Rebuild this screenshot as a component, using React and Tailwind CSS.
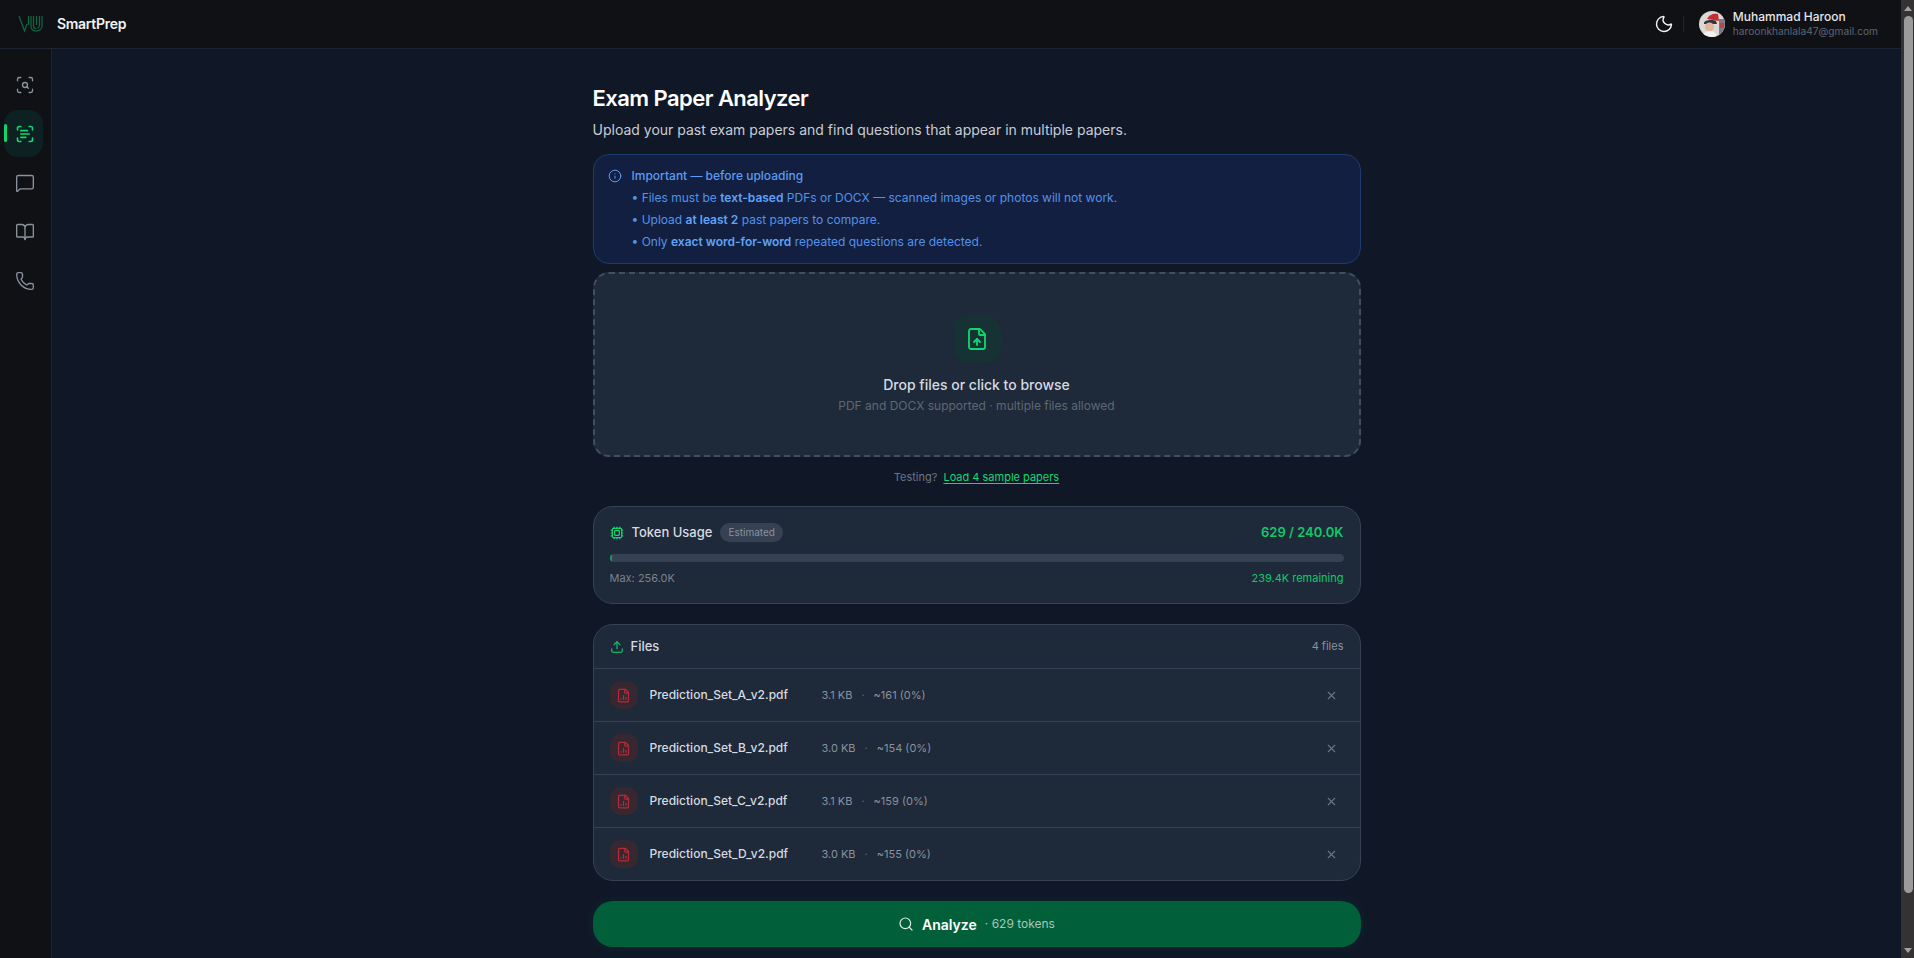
import React from "react";
import {
  ScanSearch,
  ScanText,
  MessageSquare,
  BookOpen,
  Phone,
  Moon,
  Info,
  FileUp,
  Cpu,
  Upload,
  FileChartColumn,
  X,
  Search,
} from "lucide-react";

const files = [
  { name: "Prediction_Set_A_v2.pdf", size: "3.1 KB", tokens: "~161 (0%)" },
  { name: "Prediction_Set_B_v2.pdf", size: "3.0 KB", tokens: "~154 (0%)" },
  { name: "Prediction_Set_C_v2.pdf", size: "3.1 KB", tokens: "~159 (0%)" },
  { name: "Prediction_Set_D_v2.pdf", size: "3.0 KB", tokens: "~155 (0%)" },
];

const Logo = () => (
  <svg width="26" height="18" viewBox="0 0 26 18" fill="none" stroke="#0b6b45" strokeWidth="1.2">
    <path d="M1 1l5.5 15L9 9" />
    <path d="M10.5 1v9" />
    <path d="M13 1v10c0 3 1.5 5 5 5s6-2 6-5V1" />
    <path d="M15.5 1v10c0 1.5 1 2.5 2.5 2.5" />
    <path d="M18.5 1v9" />
    <path d="M21.5 1v9c0 2-1 3-2 3.5" />
  </svg>
);

const Avatar = () => (
  <svg width="26" height="26" viewBox="0 0 26 26" className="rounded-full">
    <rect width="26" height="26" fill="#dcd8d6" />
    <path d="M8 8c2-4 6-6 11-5l1 7z" fill="#c42f35" />
    <path d="M5 12c0-3 8-4 12-2l1 3H5z" fill="#35343a" />
    <circle cx="10.5" cy="16" r="4.5" fill="#e3b49c" />
    <path d="M3 26c1-4 4-6 8-6s6 2 7 6z" fill="#f4f1f0" />
    <path d="M20 8h6v18h-6z" fill="#7e7a82" />
    <path d="M21 12h4v5h-4z" fill="#b8474b" />
  </svg>
);

// the page scrolls in the reference, this is just its scrollbar
const ScrollBar = () => (
  <div className="w-[13px] h-full shrink-0 bg-[#353234] flex flex-col items-center">
    <div className="h-[16px] flex items-center justify-center">
      <div className="w-0 h-0 border-x-[4px] border-x-transparent border-b-[5px] border-b-[#a3a3a3]" />
    </div>
    <div className="w-[9px] ml-[1px] h-[877px] rounded-full bg-[#9b9b9b]" />
    <div className="mt-auto h-[16px] flex items-center justify-center">
      <div className="w-0 h-0 border-x-[4px] border-x-transparent border-t-[5px] border-t-[#a3a3a3]" />
    </div>
  </div>
);

const SideItem = ({ icon: Icon, active }) => (
  <div className="relative w-full h-[49px] flex items-center">
    {active && <div className="absolute left-[4px] top-[15px] w-[3px] h-[18px] rounded-full bg-[#0fd56f]" />}
    <div
      className={`ml-[4px] w-[39px] h-[47px] pl-[3px] rounded-[14px] flex items-center justify-center ${
        active ? "bg-[#0d2123] text-[#10d870]" : "text-[#8a929e]"
      }`}
    >
      <Icon size={20} strokeWidth={active ? 2 : 1.6} />
    </div>
  </div>
);

const FileRow = ({ file }) => (
  <div className="h-[53px] flex items-center px-4 border-t border-[#364153]">
    <div className="w-7 h-7 rounded-[10px] bg-[#372730] flex items-center justify-center text-[#b32c37] shrink-0">
      <FileChartColumn size={15} strokeWidth={2} />
    </div>
    <span className="ml-3 w-[172px] text-[12px] font-medium text-[#d6dae0]">{file.name}</span>
    <span className="text-[11px] text-[#8a929e]">{file.size}</span>
    <span className="mx-[9px] text-[11px] text-[#5f6875]">·</span>
    <span className="text-[11px] text-[#8a929e]">{file.tokens}</span>
    <X size={13} className="ml-auto mr-[6px] text-[#6b7482]" />
  </div>
);

export default function App() {
  return (
    <div className="h-screen flex overflow-hidden bg-[#101828] font-['Inter',sans-serif] text-white">
      <div className="flex-1 min-w-0 flex flex-col">
        <header className="h-[49px] shrink-0 pb-[1px] flex items-center justify-between bg-[#101115] border-b border-[#1d2330]">
          <div className="flex items-center pl-[18px]">
            <Logo />
            <span className="ml-[13px] text-[14px] tracking-[-0.3px] font-semibold text-[#f1f3f5]">SmartPrep</span>
          </div>
          <div className="flex items-center pr-[23px]">
            <Moon size={20} strokeWidth={1.7} className="text-[#f1f3f5]" />
            <div className="ml-[9px] w-px h-4 bg-[#22262e]" />
            <div className="ml-[15px] h-[26px]">
              <Avatar />
            </div>
            <div className="ml-[8px] flex flex-col">
              <span className="text-[12px] leading-[15px] font-medium text-[#e5e7eb]">Muhammad Haroon</span>
              <span className="mt-[1px] text-[10.2px] leading-[13px] text-[#5d6675]">haroonkhanlala47@gmail.com</span>
            </div>
          </div>
        </header>

        <div className="flex-1 min-h-0 flex">
          <aside className="w-[52px] shrink-0 bg-[#101115] border-r border-[#1d2330] pt-[11px] flex flex-col">
            <SideItem icon={ScanSearch} />
            <SideItem icon={ScanText} active />
            <SideItem icon={MessageSquare} />
            <SideItem icon={BookOpen} />
            <SideItem icon={Phone} />
          </aside>

          <main className="flex-1 overflow-hidden pt-[36px] flex justify-center">
            <div className="w-[768px] shrink-0">
              <h1 className="text-[22px] leading-[26px] tracking-tight font-semibold text-white">Exam Paper Analyzer</h1>
              <p className="mt-[9px] text-[14px] leading-[20px] text-[#c7ccd4]">
                Upload your past exam papers and find questions that appear in multiple papers.
              </p>

              <div className="mt-[14px] h-[110px] rounded-2xl border border-[#1e3a70] bg-[#131f40] pt-[11px] pl-[14px] pr-[15px] text-[#5a9cf2]">
                <div className="flex items-center">
                  <Info size={14} strokeWidth={1.7} />
                  <span className="ml-[10px] text-[12px] leading-[20px] font-medium">Important — before uploading</span>
                </div>
                <ul className="mt-[1px] pl-[24px] text-[12px] leading-[22px] text-[#5292ea]">
                  <li>
                    • Files must be <b className="font-semibold text-[#5fa3f8]">text-based</b> PDFs or DOCX — scanned images or photos will not work.
                  </li>
                  <li>
                    • Upload <b className="font-semibold text-[#5fa3f8]">at least 2</b> past papers to compare.
                  </li>
                  <li>
                    • Only <b className="font-semibold text-[#5fa3f8]">exact word-for-word</b> repeated questions are detected.
                  </li>
                </ul>
              </div>

              <div className="mt-[8px] h-[185px] rounded-2xl border-2 border-dashed border-[#434e5f] bg-[#1e2939] flex flex-col items-center pt-[41px]">
                <div className="w-12 h-12 rounded-2xl bg-[#163235] flex items-center justify-center text-[#10d870]">
                  <FileUp size={24} strokeWidth={1.8} />
                </div>
                <span className="mt-[12px] text-[14px] leading-[20px] font-medium text-[#d6dae0]">Drop files or click to browse</span>
                <span className="mt-[3px] text-[12px] leading-[16px] text-[#5f6875]">PDF and DOCX supported · multiple files allowed</span>
              </div>

              <div className="mt-[12px] flex justify-center items-center text-[11px] leading-[16px]">
                <span className="text-[#6b7482]">Testing?</span>
                <span className="ml-[6px] text-[#10d870] underline underline-offset-2">Load 4 sample papers</span>
              </div>

              <div className="mt-[21px] h-[98px] rounded-[20px] border border-[#364153] bg-[#1e2939] px-4 pt-[16px]">
                <div className="flex items-center">
                  <Cpu size={14} strokeWidth={2} className="text-[#10d870]" />
                  <span className="ml-[8px] text-[13px] font-medium text-[#d6dae0]">Token Usage</span>
                  <span className="ml-[8px] px-[8px] h-[19px] leading-[19px] rounded-full bg-[#364153] text-[10px] text-[#8a929e]">Estimated</span>
                  <span className="ml-auto text-[13px] font-semibold text-[#10c96a]">629 / 240.0K</span>
                </div>
                <div className="mt-[11px] h-2 rounded-full bg-[#364153] overflow-hidden">
                  <div className="h-full w-[2px] bg-[#0d9e58]" />
                </div>
                <div className="mt-[8px] flex justify-between text-[11px] leading-[16px]">
                  <span className="text-[#7a828f]">Max: 256.0K</span>
                  <span className="text-[#10c96a]">239.4K remaining</span>
                </div>
              </div>

              <div className="mt-[20px] rounded-[20px] border border-[#364153] bg-[#1e2939] overflow-hidden">
                <div className="h-[43px] flex items-center px-4">
                  <Upload size={14} strokeWidth={1.8} className="text-[#10d870]" />
                  <span className="ml-[7px] text-[13px] font-medium text-[#d6dae0]">Files</span>
                  <span className="ml-auto text-[11px] text-[#8a929e]">4 files</span>
                </div>
                {files.map((f) => (
                  <FileRow key={f.name} file={f} />
                ))}
              </div>

              <button className="mt-[20px] w-full h-[46px] rounded-[20px] bg-[#01603a] shadow-[0_0_12px_rgba(16,185,129,0.08)] flex items-center justify-center">
                <Search size={16} strokeWidth={1.8} className="text-[#e5e7eb]" />
                <span className="ml-[8px] text-[14px] font-semibold text-white">Analyze</span>
                <span className="ml-[8px] text-[12px] text-[#a9c4b8]">· 629 tokens</span>
              </button>
            </div>
          </main>
        </div>
      </div>
      <ScrollBar />
    </div>
  );
}
